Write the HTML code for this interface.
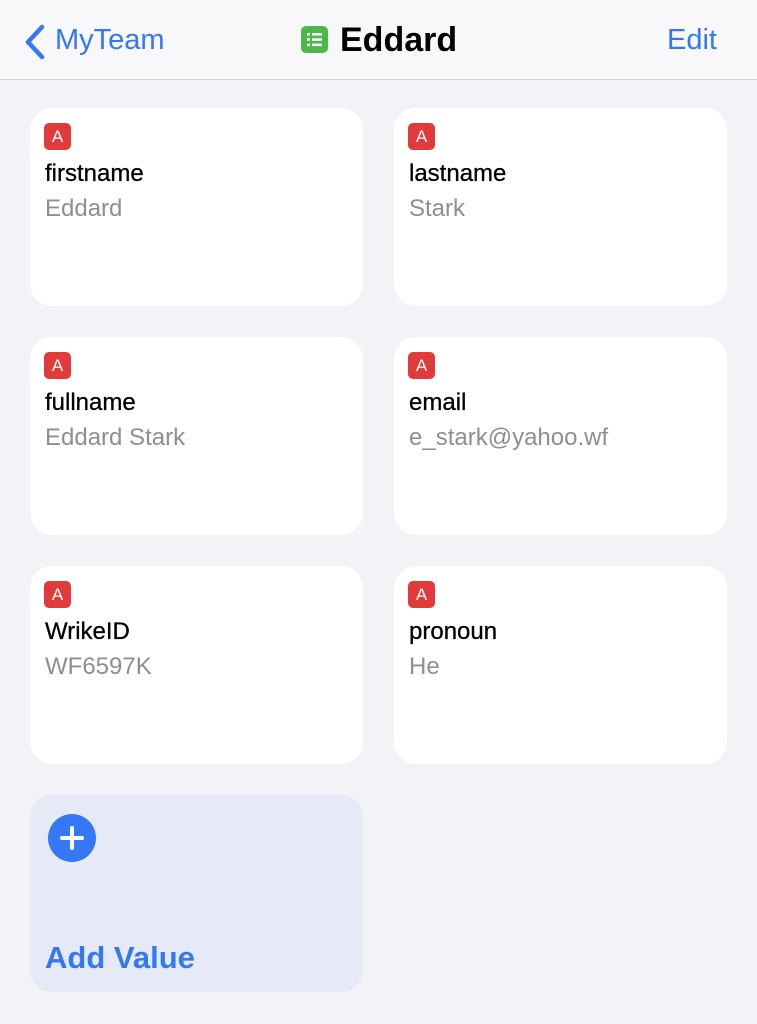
<!DOCTYPE html>
<html><head><style>
body{margin:0;width:757px;height:1024px;background:#f2f2f7;font-family:"Liberation Sans",sans-serif;position:relative;overflow:hidden}
.hdr{position:absolute;left:0;top:0;width:757px;height:79px;background:#f8f8fa;border-bottom:1px solid #d4d4d8}
.t{position:absolute;white-space:nowrap}
.card{position:absolute;width:333px;height:198px;background:#fff;border-radius:22px}
.b{position:absolute;left:14px;top:15px;width:27px;height:27px;background:#e03a3a;border-radius:5px;color:#fff;font-size:17px;text-align:center;line-height:28px}
.l{position:absolute;left:15px;top:52px;font-size:24px;color:#000;-webkit-text-stroke:0.3px #000}
.v{position:absolute;left:15px;top:87px;font-size:24px;color:#8e8e93}
</style></head><body>
<div class="hdr">
<svg style="position:absolute;left:22px;top:24px" width="26" height="36" viewBox="0 0 26 36"><path d="M20 3 L6 18 L20 33" fill="none" stroke="#3478f6" stroke-width="4.5" stroke-linecap="round" stroke-linejoin="round"/></svg>
<div class="t" style="left:55px;top:24px;font-size:29px;color:#3478f6">MyTeam</div>
<svg style="position:absolute;left:301px;top:26px" width="27" height="27" viewBox="0 0 27 27"><rect width="27" height="27" rx="5" fill="#4cb848"/><g fill="#fff"><rect x="6" y="7" width="3" height="2.5"/><rect x="11" y="7" width="10" height="2.5"/><rect x="6" y="12.3" width="3" height="2.5"/><rect x="11" y="12.3" width="10" height="2.5"/><rect x="6" y="17.6" width="3" height="2.5"/><rect x="11" y="17.6" width="10" height="2.5"/></g></svg>
<div class="t" style="left:340px;top:21px;font-size:34px;font-weight:bold;color:#000">Eddard</div>
<div class="t" style="left:667px;top:24px;font-size:29px;color:#3478f6">Edit</div>
</div>
<div class="card" style="left:30px;top:108px"><div class="b">A</div><div class="l">firstname</div><div class="v">Eddard</div></div>
<div class="card" style="left:394px;top:108px"><div class="b">A</div><div class="l">lastname</div><div class="v">Stark</div></div>
<div class="card" style="left:30px;top:337px"><div class="b">A</div><div class="l">fullname</div><div class="v">Eddard Stark</div></div>
<div class="card" style="left:394px;top:337px"><div class="b">A</div><div class="l">email</div><div class="v">e_stark@yahoo.wf</div></div>
<div class="card" style="left:30px;top:566px"><div class="b">A</div><div class="l">WrikeID</div><div class="v">WF6597K</div></div>
<div class="card" style="left:394px;top:566px"><div class="b">A</div><div class="l">pronoun</div><div class="v">He</div></div>
<div class="card" style="left:30px;top:795px;height:197px;background:#e6e9f6">
<svg style="position:absolute;left:18px;top:19px" width="48" height="48" viewBox="0 0 48 48"><circle cx="24" cy="24" r="24" fill="#3478f6"/><path d="M24 14V34M14 24H34" stroke="#fff" stroke-width="4" stroke-linecap="round"/></svg>
<div class="t" style="left:15px;top:145px;font-size:31px;font-weight:bold;color:#3478f6">Add Value</div>
</div>
</body></html>
